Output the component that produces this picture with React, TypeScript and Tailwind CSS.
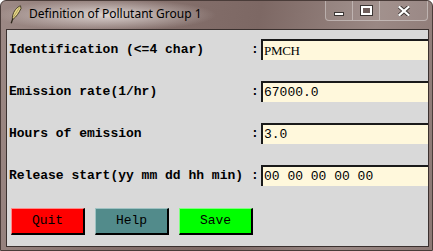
import React from "react";

const mono = "font-['Liberation_Mono','Courier_New',monospace]";

const rows = [
  { label: "Identification (<=4 char)", value: "PMCH", serif: true },
  { label: "Emission rate(1/hr)", value: "67000.0" },
  { label: "Hours of emission", value: "3.0" },
  { label: "Release start(yy mm dd hh min)", value: "00 00 00 00 00" },
];

const Feather = () => (
  <svg width="12" height="19" viewBox="0 0 12 19">
    <path
      d="M10.5 0.8 C7 2 3.5 6 2.6 11 L2.2 13.5 L3.6 13.8 C6 12 9 8 11 3.5 Z"
      fill="#e8d98a"
      stroke="#3a3320"
      strokeWidth="0.9"
    />
    <path d="M2.8 13.6 L1.2 18.2" stroke="#2a2418" strokeWidth="1.3" />
    <path d="M9.5 2.5 L3.2 12.5" stroke="#8a7a40" strokeWidth="0.6" />
  </svg>
);

const CaptionButtons = () => (
  <div className="flex h-[20px] self-start">
    <div className="w-[28px] h-full border border-t-0 border-[rgba(255,255,255,0.35)] rounded-bl-[4px] bg-[rgba(255,255,255,0.08)] flex items-center justify-center">
      <div className="w-[10px] h-[4px] bg-white border border-[#3b3533] mt-[6px]" />
    </div>
    <div className="w-[27px] h-full border border-t-0 border-l-0 border-[rgba(255,255,255,0.35)] bg-[rgba(255,255,255,0.08)] flex items-center justify-center">
      <div className="w-[11px] h-[9px] border-[2px] border-white outline outline-1 outline-[#3b3533] bg-[#6e5d5a]" />
    </div>
    <div className="w-[48px] h-full border border-t-0 border-l-0 border-[rgba(255,255,255,0.35)] rounded-br-[4px] bg-[rgba(255,255,255,0.08)] flex items-center justify-center">
      <svg width="12" height="10" viewBox="0 0 12 10">
        <path d="M1.5 1 L10.5 9 M10.5 1 L1.5 9" stroke="#3b3533" strokeWidth="4" strokeLinecap="square" />
        <path d="M1.5 1 L10.5 9 M10.5 1 L1.5 9" stroke="#ffffff" strokeWidth="2.2" strokeLinecap="square" />
      </svg>
    </div>
  </div>
);

const TkButton = ({ text, bg, light }: { text: string; bg: string; light: string }) => (
  <button
    className={`w-[74px] h-[27px] border-t border-l border-b-2 border-r-2 border-b-black border-r-black ${mono} text-[13px] text-black ${bg} ${light}`}
  >
    {text}
  </button>
);

export default function App() {
  return (
    <div className="w-[433px] h-[251px] flex flex-col overflow-hidden bg-[linear-gradient(100deg,#9c8985_0%,#86716d_30%,#7d6864_55%,#9a8884_80%,#8c7874_100%)] border border-[#4a3c39] rounded-t-[6px]">
      <div className="h-[28px] flex items-start pr-[4px] bg-[radial-gradient(ellipse_110px_16px_at_105px_14px,rgba(235,228,226,0.85),rgba(235,228,226,0)_100%)]">
        <div className="flex items-center h-[26px] pl-[9px]">
          <Feather />
          <span className="ml-[7px] text-[12px] text-black font-['Noto_Sans','Open_Sans',sans-serif] leading-none">
            Definition of Pollutant Group 1
          </span>
        </div>
        <div className="flex-1" />
        <CaptionButtons />
      </div>
      <div className="ml-[5px] w-[423px] h-[218px] border border-[#3a302e] bg-[#d9d9d9] flex flex-col pt-[9px]">
        <div className="flex flex-col gap-[21px]">
          {rows.map((r) => (
            <div key={r.label} className="flex items-center h-[21px]">
              <span className={`pl-[2px] flex-1 ${mono} font-bold text-[13px] text-black whitespace-pre leading-none`}>
                {r.label}
              </span>
              <span className={`w-[10px] ${mono} font-bold text-[13px] text-black leading-none`}>:</span>
              <div className="w-[167px] h-[21px] bg-[#fff8dc] border-t-2 border-l-2 border-t-[#1a1a1a] border-l-[#1a1a1a] flex items-center pl-[1px]">
                <span
                  className={`text-[13px] text-black leading-none ${
                    r.serif ? "font-['Liberation_Serif',serif] tracking-[-0.3px]" : mono
                  }`}
                >
                  {r.value}
                </span>
              </div>
            </div>
          ))}
        </div>
        <div className="flex gap-[10px] pl-[4px] mt-[22px]">
          <TkButton text="Quit" bg="bg-[#ff0000]" light="border-t-[#ff8a8a] border-l-[#ff8a8a]" />
          <TkButton text="Help" bg="bg-[#528b8b]" light="border-t-[#9fc2c2] border-l-[#9fc2c2]" />
          <TkButton text="Save" bg="bg-[#00ff00]" light="border-t-[#80ff80] border-l-[#80ff80]" />
        </div>
      </div>
    </div>
  );
}
